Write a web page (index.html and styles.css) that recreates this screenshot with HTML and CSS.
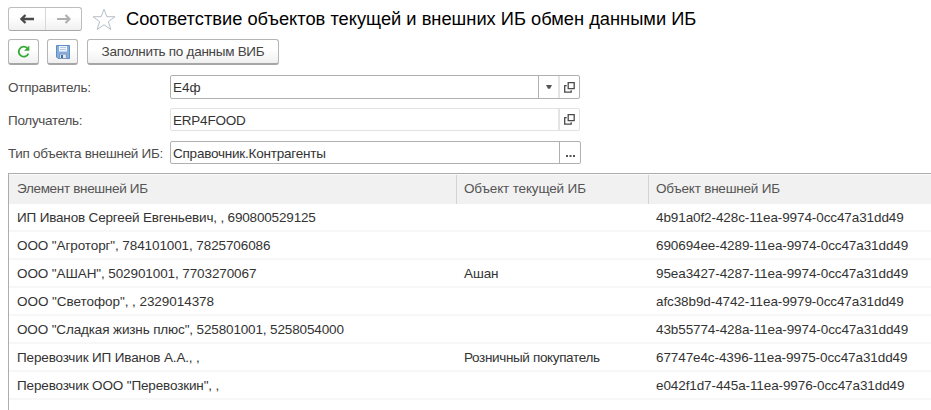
FILE: index.html
```html
<!DOCTYPE html>
<html lang="ru">
<head>
<meta charset="utf-8">
<title>Соответствие объектов</title>
<link rel="stylesheet" href="styles.css">
</head>
<body>
<header class="titlebar">
  <div class="nav">
    <button class="nav-btn" aria-label="Назад"><svg width="14" height="10" viewBox="0 0 14 10"><path d="M5.5 1 1.5 5l4 4M2 5h12" fill="none" stroke="#4a4a4a" stroke-width="2.3"/></svg></button>
    <button class="nav-btn" aria-label="Вперед"><svg width="14" height="10" viewBox="0 0 14 10"><path d="m8.5 1 4 4-4 4M12 5H0" fill="none" stroke="#b0b0b0" stroke-width="2.2"/></svg></button>
  </div>
  <svg class="star" width="24" height="23" viewBox="0 0 24 23"><path d="M12 1.2 14.8 8.7H23L16.4 13.6 18.8 21.5 12 16.7 5.2 21.5 7.6 13.6 1 8.7H9.2Z" fill="#fff" stroke="#b5bec7"/></svg>
  <h1 class="title">Соответствие объектов текущей и внешних ИБ обмен данными ИБ</h1>
</header>
<div class="toolbar">
  <button class="btn btn-icon" aria-label="Обновить"><svg width="13" height="13" viewBox="0 0 13 13"><path d="M10.2 3A5 5 0 1 0 11.4 8.6" fill="none" stroke="#35aa35" stroke-width="1.8"/><path d="M12.3.6v5.2H7.1Z" fill="#35aa35"/></svg></button>
  <button class="btn btn-icon" aria-label="Записать"><svg width="14" height="14" viewBox="0 0 14 14"><path d="M.5.5h13v13H2L.5 12Z" fill="#86aedf" stroke="#5f8cc8"/><path d="M3 1h8v5.5H3Z" fill="#f2f6fb"/><path d="M4 2.5h6M4 4.5h6" stroke="#b5c8df"/><path d="M3.5 9h7v4.5h-7Z" fill="#dce4ee" stroke="#7d98ba"/><path d="M5 10h2v3H5Z" fill="#456c9e"/></svg></button>
  <button class="btn btn-text"><span>Заполнить по данным ВИБ</span></button>
</div>
<main>
<div class="form">
  <label class="l1">Отправитель:</label>
  <div class="field tall">
    <span class="value v1">Е4ф</span>
    <i class="act drop"><svg width="6" height="4" viewBox="0 0 6 4"><path d="M0 0h6L4 3.7H2Z" fill="#555"/></svg></i>
    <i class="act open"><svg width="11" height="11" viewBox="0 0 11 11"><path d="M4.2.7h6v6h-6Z M2.7 3.7h-2v6.5h6.5v-2" fill="none" stroke="#4a4a4a" stroke-width="1.3"/></svg></i>
  </div>
  <label class="l2">Получатель:</label>
  <div class="field readonly">
    <span class="value v2">ERP4FOOD</span>
    <i class="act open"><svg width="11" height="11" viewBox="0 0 11 11"><path d="M4.2.7h6v6h-6Z M2.7 3.7h-2v6.5h6.5v-2" fill="none" stroke="#4a4a4a" stroke-width="1.3"/></svg></i>
  </div>
  <label class="l3">Тип объекта внешней ИБ:</label>
  <div class="field wide">
    <span class="value v3">Справочник.Контрагенты</span>
    <i class="act more"><svg width="9" height="2" viewBox="0 0 9 2"><path d="M0 0h2v2H0ZM3.5 0h2v2h-2ZM7 0h2v2H7Z" fill="#555"/></svg></i>
  </div>
</div>
<div class="grid">
  <div class="row head"><span class="h1">Элемент внешней ИБ</span><span class="h2">Объект текущей ИБ</span><span class="h3">Объект внешней ИБ</span></div>
  <div class="row name-long"><span>ИП Иванов Сергеей Евгеньевич, , 690800529125</span><span></span><span>4b91a0f2-428c-11ea-9974-0cc47a31dd49</span></div>
  <div class="row"><span>ООО "Агроторг", 784101001, 7825706086</span><span></span><span>690694ee-4289-11ea-9974-0cc47a31dd49</span></div>
  <div class="row"><span>ООО "АШАН", 502901001, 7703270067</span><span>Ашан</span><span>95ea3427-4287-11ea-9974-0cc47a31dd49</span></div>
  <div class="row name-short"><span>ООО "Светофор", , 2329014378</span><span></span><span>afc38b9d-4742-11ea-9979-0cc47a31dd49</span></div>
  <div class="row name-words"><span>ООО "Сладкая жизнь плюс", 525801001, 5258054000</span><span></span><span>43b55774-428a-11ea-9974-0cc47a31dd49</span></div>
  <div class="row name-words"><span>Перевозчик ИП Иванов А.А., ,</span><span class="customer">Розничный покупатель</span><span>67747e4c-4396-11ea-9975-0cc47a31dd49</span></div>
  <div class="row name-words"><span>Перевозчик ООО "Перевозкин", ,</span><span></span><span>e042f1d7-445a-11ea-9976-0cc47a31dd49</span></div>
</div>
</main>
</body>
</html>
```
FILE: styles.css
```css
* { box-sizing: border-box; }
body {
  margin: 0;
  height: 410px;
  overflow: hidden;
  display: flex;
  flex-direction: column;
  background: #fff;
  color: #333;
  font: 13.5px/16px "Liberation Sans", Arial, sans-serif;
}
button { margin: 0; padding: 0; font: inherit; color: #444; }
svg { display: block; flex: none; }
.titlebar { display: flex; align-items: flex-start; height: 39px; padding: 7px 0 0 8px; }
.nav {
  display: flex;
  width: 74px;
  height: 24px;
  border: 1px solid #bdbdbd;
  border-bottom-color: #a8a8a8;
  border-radius: 3px;
  background: linear-gradient(#fff 40%, #f0f0f0);
}
.nav-btn { display: flex; align-items: center; justify-content: center; width: 36px; border: 0; background: none; }
.nav-btn + .nav-btn { border-left: 1px solid #d6d6d6; }
.star { margin: 1px 0 0 10px; }
.title { margin: 1px 0 0 10px; font-size: 18.3px; line-height: 22px; font-weight: 400; color: #000; white-space: nowrap; }
.toolbar { display: flex; gap: 8px; height: 36px; padding-left: 8px; }
.btn {
  display: flex;
  align-items: center;
  justify-content: center;
  height: 26px;
  border: 1px solid #b5b5b5;
  border-bottom: 2px solid #a6a6a6;
  border-radius: 3px;
  background: linear-gradient(#fff 40%, #f0f0f0);
}
.btn-icon { width: 31px; }
.btn-text { width: 192px; margin-left: 1px; letter-spacing: -.28px; }
.form {
  display: grid;
  grid-template-columns: 162px 412px;
  grid-auto-rows: 24px;
  row-gap: 9px;
  padding-left: 8px;
  color: #4d4d4d;
  white-space: nowrap;
}
.form label { padding-top: 5px; }
.l1 { letter-spacing: -.23px; }
.l2, .l3 { letter-spacing: -.3px; }
.field { display: flex; width: 410px; height: 23px; border: 1px solid #b0b0b0; border-radius: 2px; color: #333; }
.field.tall { height: 24px; }
.field.wide { width: 411px; }
.field.readonly { border-color: #e2e2e2; }
.value { flex: 1; padding: 4px 0 0 2px; }
.v2, .v3 { letter-spacing: -.22px; }
.act { display: flex; align-items: center; justify-content: center; width: 21px; border-left: 1px solid #b0b0b0; }
.drop { width: 20px; }
.open { border-left: 2px solid #e4e4e4; }
.more { padding-top: 7px; }
.grid { height: 237px; margin: 8px 0 0 8px; border: solid #adadad; border-width: 1px 0 0 1px; }
.row { display: grid; grid-template-columns: 447px 192px 1fr; height: 28px; border-bottom: 2px solid #f7f7f7; white-space: nowrap; letter-spacing: -.1px; }
.row span { padding: 6px 0 0 8px; }
.name-long span:first-child { letter-spacing: -.17px; }
.name-short span:first-child { letter-spacing: -.05px; }
.name-words span:first-child { letter-spacing: -.14px; }
.row .customer { letter-spacing: -.35px; }
.head { height: 30px; border: 0; border-top: 1px solid #fafafa; background: #f1f1f1; color: #555; }
.row.head span + span { padding-left: 7px; border-left: 1px solid #d4d4d4; }
.h1 { letter-spacing: -.33px; }
.h2 { letter-spacing: -.15px; }
.h3 { letter-spacing: -.22px; }
```
